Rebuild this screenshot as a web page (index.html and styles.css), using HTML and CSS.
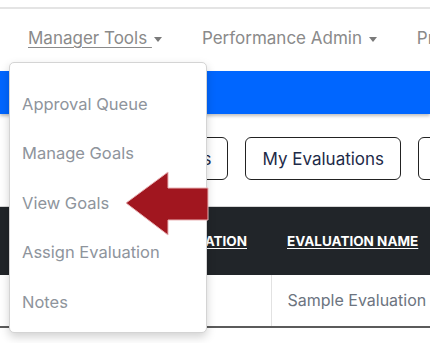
FILE: index.html
```html
<!DOCTYPE html>
<html lang="en">
<head>
    <meta charset="UTF-8">
    <meta name="viewport" content="width=device-width, initial-scale=1.0">
    <title>Manager Tools</title>
    <link rel="stylesheet" href="styles.css">
</head>
<body>
    <div class="page">
        <div class="topbar"></div>
        <nav class="mainNav">
            <a href="#" class="navItem active"><span class="navLabel">Manager Tools&nbsp;</span><span class="caret"></span></a>
            <a href="#" class="navItem"><span class="navLabel">Performance Admin&nbsp;</span><span class="caret"></span></a>
            <a href="#" class="navItem"><span class="navLabel">Profile</span></a>
        </nav>
        <div class="banner"></div>
        <div class="tabs">
            <a href="#" class="tab">My Goals</a>
            <a href="#" class="tab">My Evaluations</a>
            <a href="#" class="tab">Team</a>
        </div>
        <table class="evalTable">
            <thead>
                <tr>
                    <th class="col-first"><a href="#">Date of Evaluation</a></th>
                    <th class="col-second"><a href="#">Evaluation Name</a></th>
                </tr>
            </thead>
            <tbody>
                <tr>
                    <td class="col-first"></td>
                    <td class="col-second">Sample Evaluation</td>
                </tr>
            </tbody>
        </table>

        <div class="dropdown">
            <a href="#" class="dropItem">Approval Queue</a>
            <a href="#" class="dropItem">Manage Goals</a>
            <a href="#" class="dropItem">View Goals</a>
            <a href="#" class="dropItem">Assign Evaluation</a>
            <a href="#" class="dropItem">Notes</a>
        </div>

        <!-- pointer to "View Goals" -->
        <svg class="pointer" width="86" height="68" viewBox="0 0 86 68">
            <polygon points="1,32 43,1 43,17 83,17 83,49 43,49 43,64" fill="#a1161f" stroke="#e9b3b6" stroke-width="1"/>
        </svg>
    </div>
</body>
</html>
```

FILE: styles.css
```css
* {
    box-sizing: border-box;
}
body {
    margin: 0;
    background: #fff;
    font-family: Inter, "Liberation Sans", sans-serif;
}
a {
    text-decoration: none;
    color: inherit;
}
.page {
    position: relative;
    width: 430px;
    height: 343px;
    overflow: hidden;
}
.topbar {
    height: 9px;
    border-bottom: 2px solid #e4e4e4;
}
.mainNav {
    display: flex;
    align-items: center;
    gap: 40px;
    height: 62px;
    padding: 0 0 4px 28px;
    white-space: nowrap;
}
.navItem {
    display: flex;
    align-items: center;
    font-size: 17px;
    color: #8a8a8a;
}
.navItem.active .navLabel {
    text-decoration: underline;
    text-underline-offset: 3px;
}
.caret {
    width: 0;
    height: 0;
    margin-left: 2px;
    margin-top: 2px;
    border-left: 4.5px solid transparent;
    border-right: 4.5px solid transparent;
    border-top: 5px solid #7a7a7a;
}
.banner {
    height: 43px;
    background: #0066ff;
    box-shadow: 0 2px 3px rgba(0, 0, 0, 0.25);
}
.tabs {
    display: flex;
    gap: 17px;
    padding: 23px 0 26px 119px;
    white-space: nowrap;
}
.tab {
    display: flex;
    align-items: center;
    flex-shrink: 0;
    height: 43px;
    padding: 0 16px;
    border: 1px solid #222;
    border-radius: 6px;
    font-size: 17px;
    color: #1d2a48;
}
.evalTable {
    width: 560px;
    border-collapse: collapse;
    border-top: 1px solid #d6d6d6;
}
.evalTable th {
    height: 68px;
    padding: 0 16px;
    background: #212529;
    text-align: left;
    font-size: 13.5px;
    font-weight: 700;
    text-transform: uppercase;
    color: #fff;
}
.evalTable th a {
    text-decoration: underline;
    text-underline-offset: 2px;
}
.evalTable th.col-first {
    text-align: right;
    padding-right: 24px;
}
.evalTable td {
    height: 52px;
    padding: 0 16px;
    font-size: 16px;
    color: #6c7480;
    border-bottom: 2px solid #5b5b5b;
}
.col-first {
    width: 271px;
}
.evalTable td.col-first {
    border-right: 1px solid #e2e2e2;
}
.dropdown {
    position: absolute;
    top: 62px;
    left: 9px;
    width: 198px;
    height: 271px;
    padding-top: 16px;
    background: #fff;
    border: 1px solid #d4d4d4;
    border-radius: 5px;
    box-shadow: 0 4px 10px rgba(0, 0, 0, 0.18);
    display: flex;
    flex-direction: column;
}
.dropItem {
    display: flex;
    align-items: center;
    height: 49.5px;
    padding-left: 12px;
    font-size: 16.5px;
    color: #8e949c;
}
.pointer {
    position: absolute;
    top: 171px;
    left: 125px;
}
```
